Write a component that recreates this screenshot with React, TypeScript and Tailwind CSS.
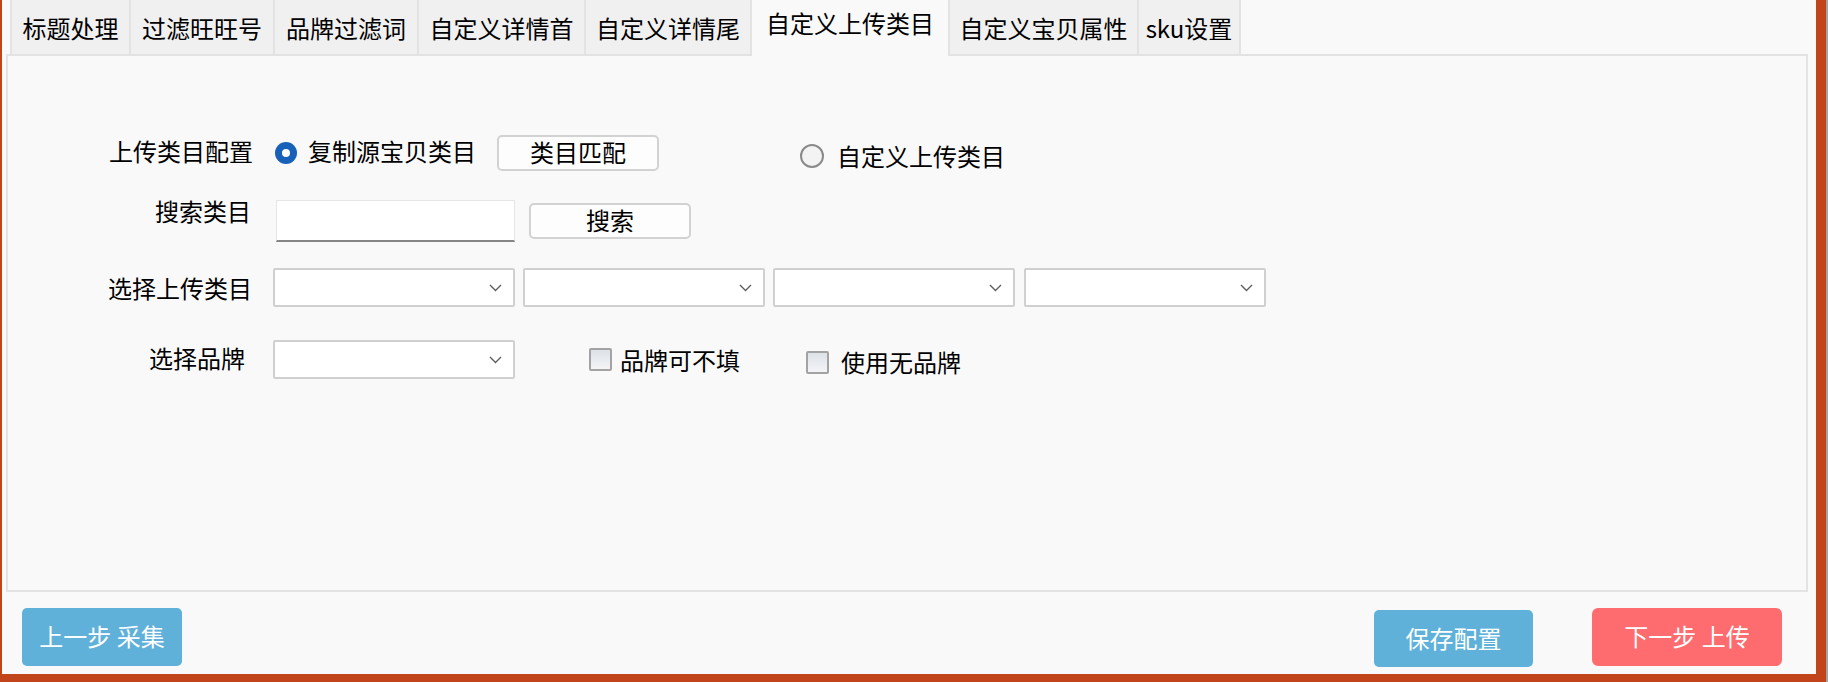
import { ReactNode } from "react";

interface Tab {
  label: string;
  width: string;
  active?: boolean;
  last?: boolean;
  beforeActive?: boolean;
}

const tabs: Tab[] = [
  { label: "标题处理", width: "w-[119px]" },
  { label: "过滤旺旺号", width: "w-[144px]" },
  { label: "品牌过滤词", width: "w-[144px]" },
  { label: "自定义详情首", width: "w-[167px]" },
  { label: "自定义详情尾", width: "w-[168px]", beforeActive: true },
  { label: "自定义上传类目", width: "w-[196px]", active: true },
  { label: "自定义宝贝属性", width: "w-[189px]" },
  { label: "sku设置", width: "w-[104px]", last: true },
];

const Chevron = () => (
  <svg width="13" height="8" viewBox="0 0 13 8" fill="none">
    <polyline
      points="1,1 6.5,6.5 12,1"
      stroke="#5f5f5f"
      strokeWidth="1.4"
    />
  </svg>
);

const Select = ({ className = "" }: { className?: string }) => (
  <div
    className={`flex h-[39px] w-[242px] items-center justify-end rounded-[2px] border-2 border-[#d0d0d0] bg-white pr-[11px] ${className}`}
  >
    <Chevron />
  </div>
);

const GrayButton = ({
  children,
  className = "",
}: {
  children: ReactNode;
  className?: string;
}) => (
  <button
    type="button"
    className={`flex h-[36px] w-[162px] items-center justify-center rounded-[5px] border-2 border-[#d2d2d2] bg-[#fdfdfd] pb-[2px] text-[24px] leading-[24px] ${className}`}
  >
    {children}
  </button>
);

const Checkbox = ({ className = "" }: { className?: string }) => (
  <span
    className={`block h-[23px] w-[23px] rounded-[2px] border-2 border-[#a3a3a3] bg-gradient-to-b from-[#dde2e8] to-[#f3f4f6] ${className}`}
  />
);

const App = () => {
  return (
    <div className="flex h-[682px] w-[1828px] bg-[#c1441a] font-['Noto_Sans_CJK_SC','Noto_Sans',sans-serif] text-black">
      <div className="ml-[2px] flex h-[674px] w-[1814px] flex-col bg-[#f9f9f9]">
        {/* tabs */}
        <div className="relative z-10 flex h-[54px] pl-[8px]">
          {tabs.map((t) =>
            t.active ? (
              <div
                key={t.label}
                className={`flex h-[56px] ${t.width} justify-center bg-[#f9f9f9] pt-[11px] text-[24px] leading-[24px]`}
              >
                {t.label}
              </div>
            ) : (
              <div
                key={t.label}
                className={`flex h-[54px] ${t.width} justify-center border-l-2 border-[#e3e3e3] bg-[#f0f0f0] pt-[16px] text-[24px] leading-[24px] ${
                  t.last || t.beforeActive ? "border-r-2" : ""
                }`}
              >
                {t.label}
              </div>
            )
          )}
        </div>

        {/* panel */}
        <div className="ml-[4px] h-[538px] w-[1802px] border-2 border-[#e3e3e3] bg-[#f9f9f9] pt-[77px] text-[24px] leading-[24px]">
          {/* row 1 */}
          <div className="flex h-[40px] items-start">
            <span className="mt-[6px] w-[245px] text-right">上传类目配置</span>
            <span className="ml-[22px] mt-[9px] flex h-[22px] w-[22px] items-center justify-center rounded-full bg-[#1762b8]">
              <span className="h-[8px] w-[8px] rounded-full bg-white" />
            </span>
            <span className="ml-[11px] mt-[6px] w-[166px] whitespace-nowrap">
              复制源宝贝类目
            </span>
            <GrayButton className="ml-[23px] mt-[2px]">类目匹配</GrayButton>
            <span className="ml-[141px] mt-[11px] block h-[24px] w-[24px] rounded-full border-2 border-[#8a8a8a] bg-[#f3f3f3]" />
            <span className="ml-[13px] mt-[11px] whitespace-nowrap">
              自定义上传类目
            </span>
          </div>

          {/* row 2 */}
          <div className="mt-[27px] flex h-[42px] items-start">
            <span className="-mt-[1px] w-[243px] text-right">搜索类目</span>
            <div className="ml-[25px] h-[42px] w-[239px] border border-b-2 border-[#e6e6e6] border-b-[#858585] bg-white" />
            <GrayButton className="ml-[14px] mt-[3px]">搜索</GrayButton>
          </div>

          {/* row 3 */}
          <div className="mt-[26px] flex h-[39px] items-start">
            <span className="mt-[8px] w-[244px] text-right">选择上传类目</span>
            <Select className="ml-[21px]" />
            <Select className="ml-[8px]" />
            <Select className="ml-[8px]" />
            <Select className="ml-[9px]" />
          </div>

          {/* row 4 */}
          <div className="mt-[33px] flex h-[39px] items-start">
            <span className="mt-[6px] w-[237px] text-right">选择品牌</span>
            <Select className="ml-[28px]" />
            <Checkbox className="ml-[74px] mt-[8px]" />
            <span className="ml-[8px] mt-[8px] w-[121px] whitespace-nowrap">
              品牌可不填
            </span>
            <Checkbox className="ml-[65px] mt-[11px]" />
            <span className="ml-[12px] mt-[10px] whitespace-nowrap">
              使用无品牌
            </span>
          </div>
        </div>

        {/* bottom buttons */}
        <div className="flex h-[82px] items-start text-[24px] leading-[24px] text-white">
          <button
            type="button"
            className="ml-[20px] mt-[16px] flex h-[58px] w-[160px] items-center justify-center rounded-[5px] bg-[#5fb1da] pb-[3px] whitespace-pre"
          >
            上一步 采集
          </button>
          <button
            type="button"
            className="ml-auto mt-[18px] flex h-[57px] w-[159px] items-center justify-center rounded-[5px] bg-[#5fb1da] pb-[2px]"
          >
            保存配置
          </button>
          <button
            type="button"
            className="ml-[59px] mr-[34px] mt-[16px] flex h-[58px] w-[190px] items-center justify-center rounded-[6px] bg-[#ff6c70] pb-[3px] whitespace-pre"
          >
            下一步 上传
          </button>
        </div>
      </div>
      <div className="ml-auto h-full w-[2px] bg-[#a3a3a3]" />
    </div>
  );
};

export default App;
